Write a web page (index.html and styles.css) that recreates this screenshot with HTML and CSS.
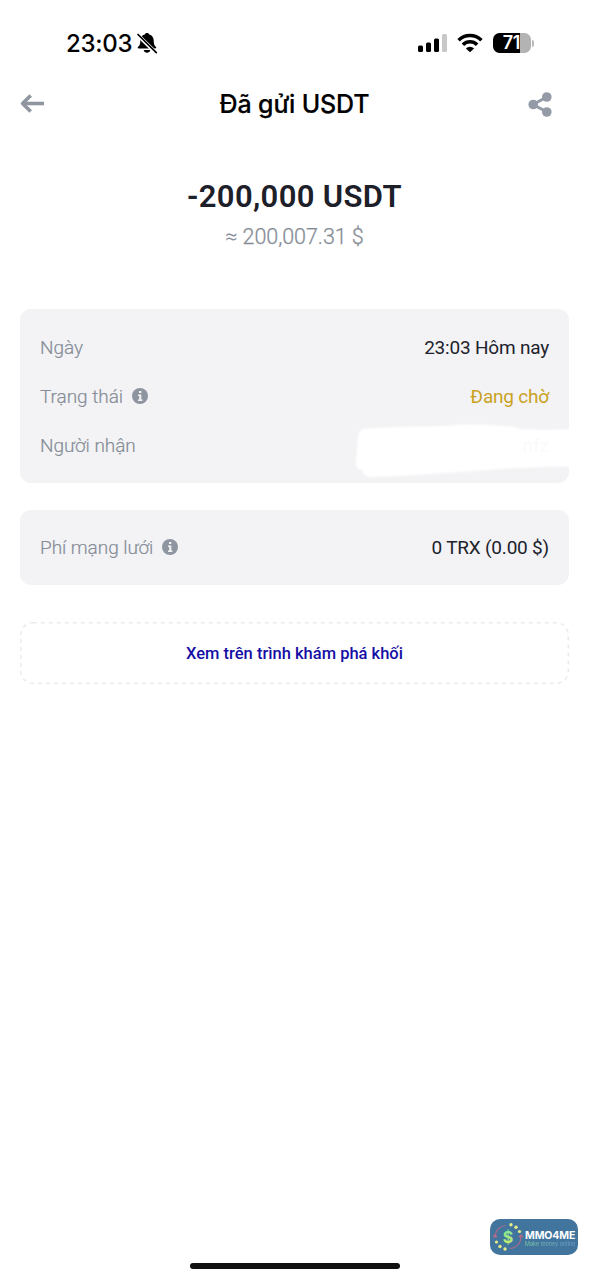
FILE: index.html
```html
<!DOCTYPE html>
<html lang="vi">
<head>
<meta charset="utf-8">
<meta name="viewport" content="width=device-width, initial-scale=1">
<title>Đã gửi USDT</title>
<link rel="stylesheet" href="styles.css">
</head>
<body>
<div class="screen">
  <div class="status-bar">
    <div class="clock">
      <span class="time">23:03</span>
      <svg class="bell" width="22" height="22" viewBox="0 0 22 22">
        <path d="M11 1c1.200 0 2 .6 2.300 1.500 2.800.8 4.400 3 4.400 6 0 3.500.6 4.900 2.100 6.200.8.700.5 1.800-.6 1.800H2.800c-1.100 0-1.400-1.100-.6-1.800 1.500-1.300 2.100-2.700 2.100-6.200 0-3 1.600-5.200 4.400-6C9 1.600 9.800 1 11 1zM7.700 18h6.600c-.3 1.800-1.700 2.800-3.300 2.800S8 19.800 7.700 18z" fill="#000"/>
        <path d="M1.300 2.500 20 20.800" stroke="#fff" stroke-width="3.800"/>
        <path d="M2 2.500 20.300 20.600" stroke="#000" stroke-width="1.700" stroke-linecap="round"/>
      </svg>
    </div>
    <div class="indicators">
      <svg class="signal" width="30" height="20" viewBox="0 0 30 20">
        <g fill="#000">
          <rect x="0" y="12.500" width="5" height="6.500" rx="1.500"/>
          <rect x="8" y="9.500" width="5" height="9.500" rx="1.500"/>
          <rect x="16" y="5.500" width="5" height="13.500" rx="1.500"/>
        </g>
        <rect x="24" y="1" width="5" height="18" rx="1.500" fill="#c8c8c8"/>
      </svg>
      <svg class="wifi" width="26" height="20" viewBox="0 0 26 20">
        <g fill="none" stroke="#000" stroke-width="3.500">
          <path d="M1.600 7.200a16.100 16.100 0 0 1 22.800 0"/>
          <path d="M5.900 11.700a10 10 0 0 1 14.200 0"/>
        </g>
        <path d="M13 19.200 8.900 15.400a5.800 5.800 0 0 1 8.200 0z" fill="#000"/>
      </svg>
      <div class="battery"><span class="battery-level">71</span></div>
      <span class="battery-cap"></span>
    </div>
  </div>

  <header class="header">
    <svg class="back" width="26" height="20" viewBox="0 0 26 20" fill="none" stroke="#8f96a0" stroke-width="3.600">
      <path d="M24 9.500H3"/>
      <path d="M10.700 1.400 2.600 9.500l8.100 8.100" stroke-linejoin="round"/>
    </svg>
    <h1 class="title">Đã gửi USDT</h1>
    <svg class="share" width="24" height="26" viewBox="0 0 24 26">
      <path d="M19 6 5 13.500 19 21" fill="none" stroke="#949ba7" stroke-width="3"/>
      <g fill="#949ba7"><circle cx="18.800" cy="6" r="4.800"/><circle cx="5.200" cy="13.500" r="4.800"/><circle cx="18.800" cy="21" r="4.800"/></g>
    </svg>
  </header>

  <section class="summary">
    <div class="amount">-200,000 USDT</div>
    <div class="fiat">≈ 200,007.31 $</div>
  </section>

  <section class="card">
    <div class="row">
      <span class="label">Ngày</span>
      <span class="value value-date">23:03 Hôm nay</span>
    </div>
    <div class="row">
      <span class="label label-status">Trạng thái</span>
      <svg class="info" width="16" height="16" viewBox="0 0 16 16"><circle cx="8" cy="8" r="8" fill="#8e95a0"/><path d="M7 3h2.300v2.100H7zM6 6.600h3.300v4.900h1.100v1.400H6v-1.400h1.200V8H6z" fill="#f3f3f5"/></svg>
      <span class="value value-pending">Đang chờ</span>
    </div>
    <div class="row">
      <span class="label label-recipient">Người nhận</span>
    </div>
    <div class="redaction">
      <svg class="redaction-stroke" width="230" height="60" viewBox="0 0 230 60">
        <path d="M12 10C45 7 70 8 95 7c25-3 47-1 70 1l4 2c18 1 32 1 61 0v37c-42 1-76 2-104 5-39 2-70 5-105 6-6 0-9-3-11-8-5 0-6-4-5-9L7 17c1-4 2-6 5-7z" fill="#fff"/>
      </svg>
    </div>
    <span class="residue">nfz</span>
  </section>

  <section class="card card-fee">
    <div class="row">
      <span class="label label-fee">Phí mạng lưới</span>
      <svg class="info" width="16" height="16" viewBox="0 0 16 16"><circle cx="8" cy="8" r="8" fill="#8e95a0"/><path d="M7 3h2.300v2.100H7zM6 6.600h3.300v4.900h1.100v1.400H6v-1.400h1.200V8H6z" fill="#f3f3f5"/></svg>
      <span class="value value-fee">0 TRX (0.00 $)</span>
    </div>
  </section>

  <a class="explorer">
    <svg class="dashes" width="549" height="62" viewBox="0 0 549 62"><rect x=".75" y=".75" width="547.500" height="60.500" rx="12" fill="none" stroke="#ebebed" stroke-width="1.500" stroke-dasharray="4 4"/></svg>
    <span class="explorer-text">Xem trên trình khám phá khối</span>
  </a>

  <div class="home-indicator"></div>

  <div class="watermark">
    <svg width="30" height="30" viewBox="0 0 30 30">
      <defs><linearGradient id="coin" x1="0" y1="0" x2="0" y2="1"><stop offset="0" stop-color="#6fe3a1"/><stop offset="1" stop-color="#d5ee68"/></linearGradient></defs>
      <g fill="none" stroke="#a8688c" stroke-width="1.200"><path d="M2 16C2 9 6 4 13 3.500"/><path d="M28 14c0 7-4 12-11 12.500"/></g>
      <path d="m0 15 2-2 2 2M26 15l2-2 2 2" fill="none" stroke="#c56b83" stroke-width="1.200"/>
      <g fill="#e8ed83"><circle cx="18" cy="2.800" r="1.700"/><circle cx="23" cy="5.200" r="1.700"/><circle cx="26.500" cy="9.500" r="1.600"/><circle cx="3.500" cy="20" r="1.600"/><circle cx="7" cy="24.500" r="1.700"/><circle cx="12" cy="27" r="1.700"/></g>
      <text x="15" y="20.500" text-anchor="middle" class="coin-sign" fill="url(#coin)">$</text>
    </svg>
    <div class="brand">
      <div class="brand-name">MMO4ME</div>
      <div class="brand-tag">Make money online</div>
    </div>
  </div>
</div>
</body>
</html>
```
FILE: styles.css
```css
* { box-sizing: border-box; }
body { margin: 0; background: #fff; }
.screen {
  position: relative;
  display: flex;
  flex-direction: column;
  width: 589px;
  height: 1280px;
  padding: 0 20px 11px;
  overflow: hidden;
  background: #fff;
  font-family: Roboto, "Noto Sans", sans-serif;
  white-space: nowrap;
}
.status-bar {
  display: flex;
  justify-content: space-between;
  align-items: center;
  height: 86px;
  padding: 0 35px 0 46px;
}
.clock { display: flex; align-items: center; gap: 4px; }
.time { padding-top: 2px; font: 500 24px/28px Inter, sans-serif; letter-spacing: -.25px; color: #000; }
.bell { display: block; }
.indicators { display: flex; align-items: center; }
.wifi { margin: 0 10px 0 9px; }
.battery {
  width: 38px;
  height: 20px;
  padding-right: 1px;
  border-radius: 6.500px;
  background: linear-gradient(90deg, #000 27px, #b3b3b3 27px);
  text-align: center;
}
.battery-level { display: block; font: 600 18px/20px Inter, sans-serif; letter-spacing: -.3px; color: #fff; }
.battery-cap { width: 2px; height: 7px; margin-left: 1px; border-radius: 0 2px 2px 0; background: #b9b9b9; }

.header {
  display: grid;
  grid-template-columns: 60px 1fr 60px;
  align-items: center;
  height: 36px;
}
.share { justify-self: end; margin-right: 17px; }
.title { margin: 0; text-align: center; font: 500 25px/36px Inter, sans-serif; letter-spacing: -.15px; color: #000; -webkit-text-stroke: .2px #000; }

.summary { height: 187px; padding-top: 56px; text-align: center; }
.amount { font-size: 31px; font-weight: 600; line-height: 38px; letter-spacing: .35px; color: #1d2029; }
.fiat { margin-top: 4px; font-size: 21.500px; font-weight: 300; line-height: 34px; letter-spacing: -.05px; color: #858b96; -webkit-text-stroke: .25px #858b96; }

.card {
  position: relative;
  height: 174px;
  padding: 14px 20px 0;
  border-radius: 11px;
  background: #f3f3f5;
  font-size: 19px;
  line-height: 49px;
}
.row { display: flex; align-items: center; height: 49px; }
.label { color: #868d97; font-weight: 300; letter-spacing: -.05px; -webkit-text-stroke: .2px #868d97; }
.info { margin: -2px 0 0 8.500px; }
.value { margin-left: auto; color: #20222c; letter-spacing: -.2px; }
.value-pending { color: #caa21f; }
.redaction { position: absolute; top: 110px; right: 0; width: 218px; height: 62px; overflow: hidden; }
.redaction-stroke { display: block; filter: blur(.8px); }
.residue { position: absolute; top: 112px; right: 20px; color: #fafafb; }
.card-fee { height: 75px; margin-top: 27px; padding-top: 13px; }

.explorer {
  position: relative;
  display: flex;
  justify-content: center;
  align-items: center;
  height: 62px;
  margin-top: 37px;
  color: #150ea5;
}
.dashes { position: absolute; inset: 0; }
.explorer-text { font-size: 16.500px; font-weight: 500; }

.home-indicator { width: 210px; height: 6px; margin: auto auto 0; border-radius: 3px; background: #111; }

.watermark {
  position: absolute;
  left: 490px;
  top: 1219px;
  display: flex;
  align-items: center;
  gap: 2px;
  width: 88px;
  height: 36px;
  padding-left: 3px;
  border-radius: 10px;
  background: #42759e;
}
.coin-sign { font: 700 16px Inter, sans-serif; }
.brand { padding-top: 3px; }
.brand-name { font: 700 10.500px/11px Inter, sans-serif; letter-spacing: -.1px; color: #fff; }
.brand-tag { font: 400 5.500px/7px Inter, sans-serif; background: linear-gradient(90deg, #80cda2, #7199d0); -webkit-background-clip: text; background-clip: text; color: transparent; }
```
